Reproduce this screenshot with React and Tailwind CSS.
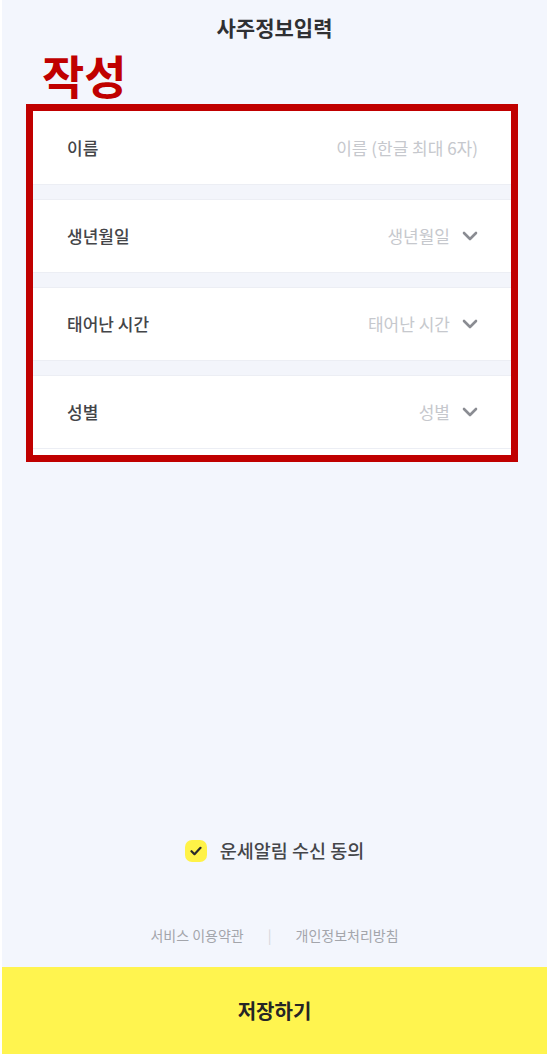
import React, { useState } from 'react';

const fields = [
  { label: '이름', placeholder: '이름 (한글 최대 6자)', select: false },
  { label: '생년월일', placeholder: '생년월일', select: true },
  { label: '태어난 시간', placeholder: '태어난 시간', select: true },
  { label: '성별', placeholder: '성별', select: true },
];

const Chevron = () => (
  <svg width="16" height="10" viewBox="0 0 16 10" fill="none" className="ml-3 shrink-0">
    <path d="M2 2l6 6 6-6" stroke="#8a8c92" strokeWidth="2.6" strokeLinecap="round" strokeLinejoin="round" />
  </svg>
);

/**
 * 사주정보입력 page
 */
const App = () => {
  const [agree, setAgree] = useState(true);

  return (
    <div
      className="flex h-[1054px] flex-col overflow-hidden border-l-2 border-white bg-[#f3f6fd]"
      style={{ fontFamily: '"Noto Sans CJK KR", "Noto Sans", sans-serif' }}
    >
      {/* Header */}
      <div className="flex h-[51px] items-start justify-center pt-[13px]">
        <h1 className="text-[21px] font-bold leading-[28px] text-[#2f3033]">사주정보입력</h1>
      </div>

      <p className="ml-[40px] h-[53px] text-[46px] font-bold leading-[46px] text-[#c00000]">작성</p>

      {/* Form box */}
      <div className="ml-[24px] w-[492px] border-[7px] border-[#c00000] bg-white">
        <div className="flex flex-col gap-[14px] bg-[#f3f5fb]">
          {fields.map((f) => (
            <div
              key={f.label}
              className="flex h-[74px] items-center justify-between border-y border-[#eceef4] bg-white pl-[34px] pr-[33px] first:border-t-0"
            >
              <span className="text-[17px] font-medium text-[#444548]">{f.label}</span>
              <span className="flex items-center text-[17px] text-[#c6c8cd]">
                {f.placeholder}
                {f.select && <Chevron />}
              </span>
            </div>
          ))}
        </div>
        <div className="h-[6px] bg-white" />
      </div>

      <div className="flex-1" />

      {/* Agreement */}
      <button
        type="button"
        onClick={() => setAgree(!agree)}
        className="flex h-6 items-center justify-center gap-[13px]"
      >
        <span
          className={
            agree
              ? 'flex h-[22px] w-[22px] items-center justify-center rounded-[7px] bg-[#fff247]'
              : 'flex h-[22px] w-[22px] items-center justify-center rounded-[7px] bg-[#e2e4ea]'
          }
        >
          <svg width="12" height="10" viewBox="0 0 12 10" fill="none">
            <path d="M1.5 5.2l3 3 6-6.4" stroke="#2a2a2a" strokeWidth="2.2" strokeLinecap="round" strokeLinejoin="round" />
          </svg>
        </span>
        <span className="text-[18.5px] font-medium text-[#45464a]">운세알림 수신 동의</span>
      </button>

      {/* Links */}
      <div className="mt-[63px] flex h-[18px] items-center justify-center text-[14px] leading-[18px] text-[#a3a5ab]">
        <span>서비스 이용약관</span>
        <span className="mx-[24px] text-[#d3d5da]">|</span>
        <span>개인정보처리방침</span>
      </div>

      {/* Save */}
      <button
        type="button"
        className="mt-[23px] flex h-[87px] w-full shrink-0 items-center justify-center bg-[#fff44f] text-[20px] font-bold text-[#252526]"
      >
        저장하기
      </button>
    </div>
  );
};

export default App;
